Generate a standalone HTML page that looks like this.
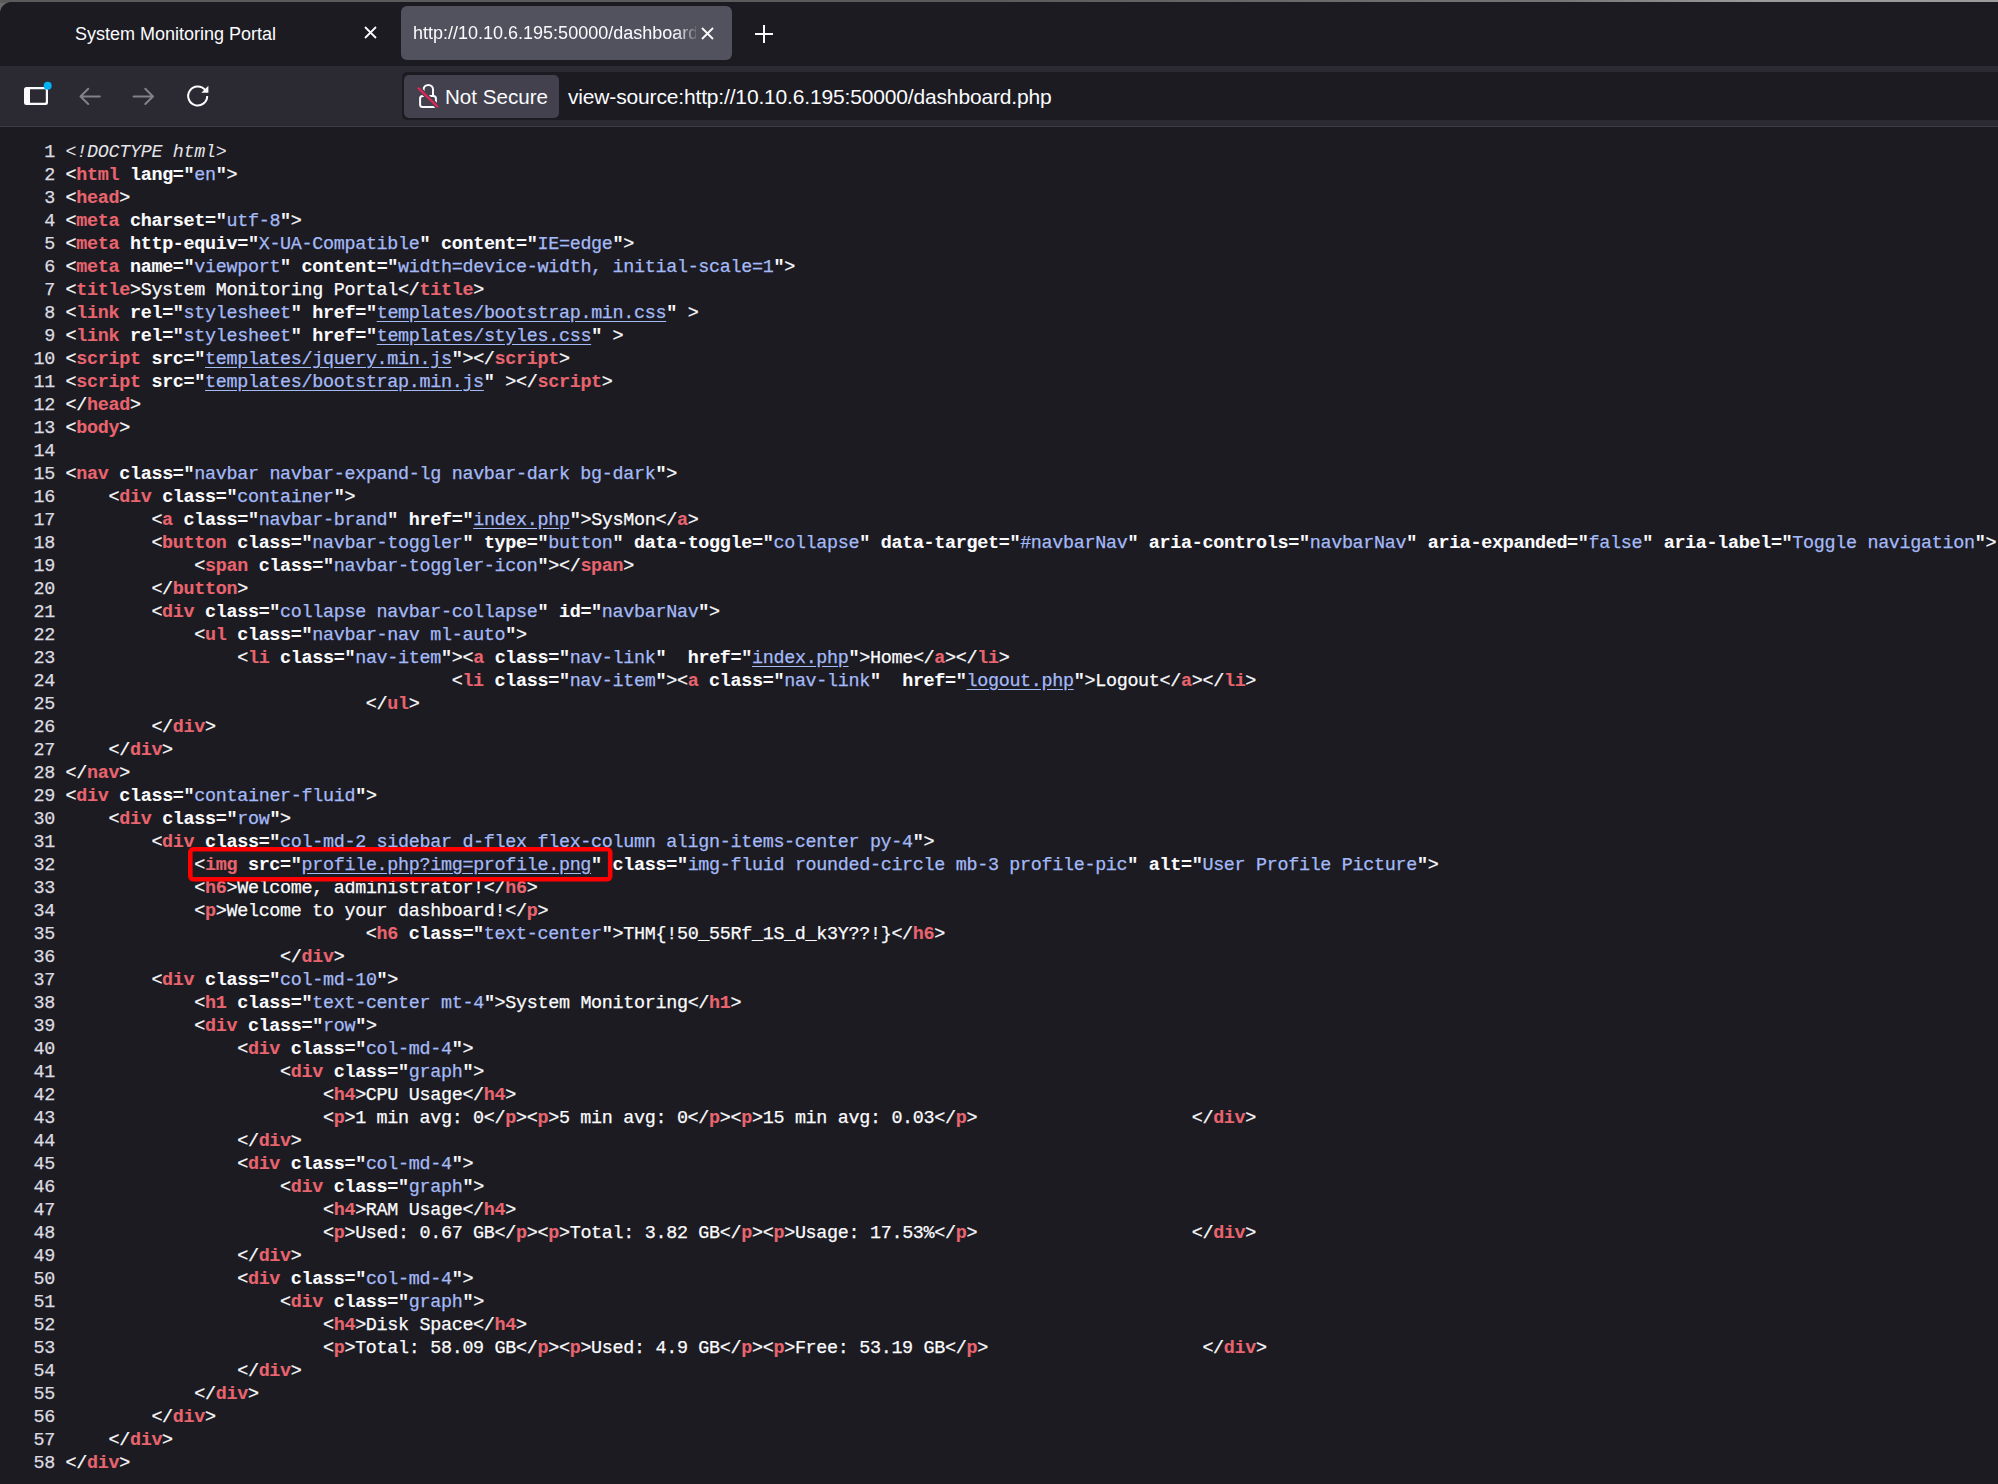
<!DOCTYPE html>
<html><head><meta charset="utf-8">
<style>
html,body{margin:0;padding:0;}
body{width:1998px;height:1484px;overflow:hidden;background:#6a6a6a;position:relative;font-family:"Liberation Sans",sans-serif;}
#top{position:absolute;left:0;top:0;width:1998px;height:3px;background:linear-gradient(to right,#5b5b5b 0px,#5b5b5b 1000px,#6c6c6c 1350px,#747474 1550px,#9a9a9a 1750px,#9c9c9c 1998px);}
#win{position:absolute;left:0;top:2px;width:1998px;height:1482px;background:#1c1b22;border-top-left-radius:12px;overflow:hidden;}
#tabs{position:absolute;left:0;top:0;width:1998px;height:64px;background:#1c1b22;}
.tabtitle{position:absolute;color:#fbfbfe;font-size:18px;white-space:nowrap;}
#t1{left:75px;top:22px;}
#sel{position:absolute;left:401px;top:4px;width:331px;height:54px;background:#52525e;border-radius:6px;overflow:hidden;}
#t2{left:12px;top:17px;width:283px;overflow:hidden;-webkit-mask-image:linear-gradient(to right,#000 262px,rgba(0,0,0,0.2) 283px);mask-image:linear-gradient(to right,#000 262px,rgba(0,0,0,0.2) 283px);}
#toolbar{position:absolute;left:0;top:64px;width:1998px;height:60px;background:#2b2a33;}
#tbline{position:absolute;left:0;top:124px;width:1998px;height:1px;background:#3c3b45;}
#urlbar{position:absolute;left:402px;top:6px;width:1700px;height:48px;background:#1c1b22;border-radius:5px;}
#pill{position:absolute;left:2px;top:3px;width:155px;height:43px;background:#42414d;border-radius:5px;}
#nstext{position:absolute;left:41px;top:10px;font-size:20.6px;color:#fbfbfe;white-space:nowrap;}
#url{position:absolute;left:166px;top:13px;font-size:21px;letter-spacing:-0.16px;color:#fbfbfe;white-space:nowrap;}
#content{position:absolute;left:0;top:125px;width:1998px;height:1357px;background:#1c1b22;}
#code{position:absolute;left:12px;top:13.6px;font-family:"Liberation Mono",monospace;font-size:18.4px;letter-spacing:-0.3125px;line-height:23px;color:#fbfbfe;white-space:pre;-webkit-text-stroke:0.25px currentColor;}
.l{height:23px;padding-left:53.6px;position:relative;}
.n{position:absolute;left:0;width:42.9px;text-align:right;color:#dcdce0;}
b{font-weight:bold;-webkit-text-stroke:0.1px currentColor;}
.t{color:#e8646e;}
.v{color:#a4baf6;}
.u{text-decoration:underline;text-underline-offset:3px;}
.d{color:#e4e4e8;font-style:italic;-webkit-text-stroke:0;}
</style></head><body>
<div id="top"></div>
<div id="win">
 <div id="tabs">
  <div class="tabtitle" id="t1">System Monitoring Portal</div>
  <svg style="position:absolute;left:364px;top:24px" width="13" height="13" viewBox="0 0 13 13"><path d="M1 1L12 12M12 1L1 12" stroke="#fbfbfe" stroke-width="1.8"/></svg>
  <div id="sel"><div class="tabtitle" id="t2">http://10.10.6.195:50000/dashboard.php</div>
   <svg style="position:absolute;left:300px;top:21px" width="13" height="13" viewBox="0 0 13 13"><path d="M1 1L12 12M12 1L1 12" stroke="#fbfbfe" stroke-width="1.8"/></svg>
  </div>
  <svg style="position:absolute;left:755px;top:23px" width="18" height="18" viewBox="0 0 18 18"><path d="M9 0V18M0 9H18" stroke="#fbfbfe" stroke-width="2"/></svg>
 </div>
 <div id="toolbar">
  <svg style="position:absolute;left:0;top:0" width="240" height="60" viewBox="0 66 240 60">
   <path fill="#fbfbfe" fill-rule="evenodd" d="M26.5 87H45.5A2.5 2.5 0 0 1 48 89.5V102.5A2.5 2.5 0 0 1 45.5 105H26.5A2.5 2.5 0 0 1 24 102.5V89.5A2.5 2.5 0 0 1 26.5 87ZM30 89.2H44.8A1 1 0 0 1 45.8 90.2V101.8A1 1 0 0 1 44.8 102.8H30Z"/>
   <circle cx="47.7" cy="85.7" r="4" fill="#00b3f4"/>
   <g stroke="#fbfbfe" stroke-opacity="0.42" stroke-width="2" fill="none" stroke-linecap="round" stroke-linejoin="round">
    <path d="M99.8 96.5H80.5M88.2 88.8L80.5 96.5L88.2 104"/>
    <path d="M133.6 96.5H153M145.3 88.8L153 96.5L145.3 104"/>
   </g>
   <path d="M205.2 90.2A9.5 9.5 0 1 0 207.2 96" stroke="#fbfbfe" stroke-width="2" fill="none"/>
   <path d="M201.3 92.7H208.4V85.8Z" fill="#fbfbfe"/>
  </svg>
  <div id="urlbar">
   <div id="pill"><div id="nstext">Not Secure</div>
    <svg style="position:absolute;left:0;top:0" width="60" height="43" viewBox="404 75 60 43">
     <path d="M423.6 96.5V89.6A4.7 4.7 0 0 1 433 89.6V97" stroke="#fbfbfe" stroke-width="2" fill="none"/>
     <rect x="420.1" y="96" width="15.8" height="11" rx="2.5" stroke="#fbfbfe" stroke-width="2" fill="none"/>
     <path d="M418 87.7L437.9 107" stroke="#42414d" stroke-width="4.6"/>
     <path d="M418.6 88.3L437.3 106.4" stroke="#dc2654" stroke-width="2.3" stroke-linecap="round"/>
    </svg></div>
   <div id="url">view-source:http://10.10.6.195:50000/dashboard.php</div>
  </div>
 </div>
 <div id="tbline"></div>
 <div id="content">
  <div id="code"><div class="l"><span class="n">1</span><i class="d">&lt;!DOCTYPE html&gt;</i></div><div class="l"><span class="n">2</span>&lt;<b class="t">html</b> <b>lang="</b><span class="v">en</span><b>"</b>&gt;</div><div class="l"><span class="n">3</span>&lt;<b class="t">head</b>&gt;</div><div class="l"><span class="n">4</span>&lt;<b class="t">meta</b> <b>charset="</b><span class="v">utf-8</span><b>"</b>&gt;</div><div class="l"><span class="n">5</span>&lt;<b class="t">meta</b> <b>http-equiv="</b><span class="v">X-UA-Compatible</span><b>"</b> <b>content="</b><span class="v">IE=edge</span><b>"</b>&gt;</div><div class="l"><span class="n">6</span>&lt;<b class="t">meta</b> <b>name="</b><span class="v">viewport</span><b>"</b> <b>content="</b><span class="v">width=device-width, initial-scale=1</span><b>"</b>&gt;</div><div class="l"><span class="n">7</span>&lt;<b class="t">title</b>&gt;System Monitoring Portal&lt;/<b class="t">title</b>&gt;</div><div class="l"><span class="n">8</span>&lt;<b class="t">link</b> <b>rel="</b><span class="v">stylesheet</span><b>"</b> <b>href="</b><span class="v u">templates/bootstrap.min.css</span><b>"</b> &gt;</div><div class="l"><span class="n">9</span>&lt;<b class="t">link</b> <b>rel="</b><span class="v">stylesheet</span><b>"</b> <b>href="</b><span class="v u">templates/styles.css</span><b>"</b> &gt;</div><div class="l"><span class="n">10</span>&lt;<b class="t">script</b> <b>src="</b><span class="v u">templates/jquery.min.js</span><b>"</b>&gt;&lt;/<b class="t">script</b>&gt;</div><div class="l"><span class="n">11</span>&lt;<b class="t">script</b> <b>src="</b><span class="v u">templates/bootstrap.min.js</span><b>"</b> &gt;&lt;/<b class="t">script</b>&gt;</div><div class="l"><span class="n">12</span>&lt;/<b class="t">head</b>&gt;</div><div class="l"><span class="n">13</span>&lt;<b class="t">body</b>&gt;</div><div class="l"><span class="n">14</span></div><div class="l"><span class="n">15</span>&lt;<b class="t">nav</b> <b>class="</b><span class="v">navbar navbar-expand-lg navbar-dark bg-dark</span><b>"</b>&gt;</div><div class="l"><span class="n">16</span>    &lt;<b class="t">div</b> <b>class="</b><span class="v">container</span><b>"</b>&gt;</div><div class="l"><span class="n">17</span>        &lt;<b class="t">a</b> <b>class="</b><span class="v">navbar-brand</span><b>"</b> <b>href="</b><span class="v u">index.php</span><b>"</b>&gt;SysMon&lt;/<b class="t">a</b>&gt;</div><div class="l"><span class="n">18</span>        &lt;<b class="t">button</b> <b>class="</b><span class="v">navbar-toggler</span><b>"</b> <b>type="</b><span class="v">button</span><b>"</b> <b>data&#45;toggle="</b><span class="v">collapse</span><b>"</b> <b>data&#45;target="</b><span class="v">#navbarNav</span><b>"</b> <b>aria-controls="</b><span class="v">navbarNav</span><b>"</b> <b>aria-expanded="</b><span class="v">false</span><b>"</b> <b>aria-label="</b><span class="v">Toggle navigation</span><b>"</b>&gt;</div><div class="l"><span class="n">19</span>            &lt;<b class="t">span</b> <b>class="</b><span class="v">navbar-toggler-icon</span><b>"</b>&gt;&lt;/<b class="t">span</b>&gt;</div><div class="l"><span class="n">20</span>        &lt;/<b class="t">button</b>&gt;</div><div class="l"><span class="n">21</span>        &lt;<b class="t">div</b> <b>class="</b><span class="v">collapse navbar-collapse</span><b>"</b> <b>id="</b><span class="v">navbarNav</span><b>"</b>&gt;</div><div class="l"><span class="n">22</span>            &lt;<b class="t">ul</b> <b>class="</b><span class="v">navbar-nav ml-auto</span><b>"</b>&gt;</div><div class="l"><span class="n">23</span>                &lt;<b class="t">li</b> <b>class="</b><span class="v">nav-item</span><b>"</b>&gt;&lt;<b class="t">a</b> <b>class="</b><span class="v">nav-link</span><b>"</b>  <b>href="</b><span class="v u">index.php</span><b>"</b>&gt;Home&lt;/<b class="t">a</b>&gt;&lt;/<b class="t">li</b>&gt;</div><div class="l"><span class="n">24</span>                                    &lt;<b class="t">li</b> <b>class="</b><span class="v">nav-item</span><b>"</b>&gt;&lt;<b class="t">a</b> <b>class="</b><span class="v">nav-link</span><b>"</b>  <b>href="</b><span class="v u">logout.php</span><b>"</b>&gt;Logout&lt;/<b class="t">a</b>&gt;&lt;/<b class="t">li</b>&gt;</div><div class="l"><span class="n">25</span>                            &lt;/<b class="t">ul</b>&gt;</div><div class="l"><span class="n">26</span>        &lt;/<b class="t">div</b>&gt;</div><div class="l"><span class="n">27</span>    &lt;/<b class="t">div</b>&gt;</div><div class="l"><span class="n">28</span>&lt;/<b class="t">nav</b>&gt;</div><div class="l"><span class="n">29</span>&lt;<b class="t">div</b> <b>class="</b><span class="v">container-fluid</span><b>"</b>&gt;</div><div class="l"><span class="n">30</span>    &lt;<b class="t">div</b> <b>class="</b><span class="v">row</span><b>"</b>&gt;</div><div class="l"><span class="n">31</span>        &lt;<b class="t">div</b> <b>class="</b><span class="v">col-md-2 sidebar d-flex flex-column align-items-center py-4</span><b>"</b>&gt;</div><div class="l"><span class="n">32</span>            &lt;<b class="t">img</b> <b>src="</b><span class="v u">profile.php?img=profile.png</span><b>"</b> <b>class="</b><span class="v">img-fluid rounded-circle mb-3 profile-pic</span><b>"</b> <b>alt="</b><span class="v">User Profile Picture</span><b>"</b>&gt;</div><div class="l"><span class="n">33</span>            &lt;<b class="t">h6</b>&gt;Welcome, administrator!&lt;/<b class="t">h6</b>&gt;</div><div class="l"><span class="n">34</span>            &lt;<b class="t">p</b>&gt;Welcome to your dashboard!&lt;/<b class="t">p</b>&gt;</div><div class="l"><span class="n">35</span>                            &lt;<b class="t">h6</b> <b>class="</b><span class="v">text-center</span><b>"</b>&gt;THM{!50_55Rf_1S_d_k3Y??!}&lt;/<b class="t">h6</b>&gt;</div><div class="l"><span class="n">36</span>                    &lt;/<b class="t">div</b>&gt;</div><div class="l"><span class="n">37</span>        &lt;<b class="t">div</b> <b>class="</b><span class="v">col-md-10</span><b>"</b>&gt;</div><div class="l"><span class="n">38</span>            &lt;<b class="t">h1</b> <b>class="</b><span class="v">text-center mt-4</span><b>"</b>&gt;System Monitoring&lt;/<b class="t">h1</b>&gt;</div><div class="l"><span class="n">39</span>            &lt;<b class="t">div</b> <b>class="</b><span class="v">row</span><b>"</b>&gt;</div><div class="l"><span class="n">40</span>                &lt;<b class="t">div</b> <b>class="</b><span class="v">col-md-4</span><b>"</b>&gt;</div><div class="l"><span class="n">41</span>                    &lt;<b class="t">div</b> <b>class="</b><span class="v">graph</span><b>"</b>&gt;</div><div class="l"><span class="n">42</span>                        &lt;<b class="t">h4</b>&gt;CPU Usage&lt;/<b class="t">h4</b>&gt;</div><div class="l"><span class="n">43</span>                        &lt;<b class="t">p</b>&gt;1 min avg: 0&lt;/<b class="t">p</b>&gt;&lt;<b class="t">p</b>&gt;5 min avg: 0&lt;/<b class="t">p</b>&gt;&lt;<b class="t">p</b>&gt;15 min avg: 0.03&lt;/<b class="t">p</b>&gt;                    &lt;/<b class="t">div</b>&gt;</div><div class="l"><span class="n">44</span>                &lt;/<b class="t">div</b>&gt;</div><div class="l"><span class="n">45</span>                &lt;<b class="t">div</b> <b>class="</b><span class="v">col-md-4</span><b>"</b>&gt;</div><div class="l"><span class="n">46</span>                    &lt;<b class="t">div</b> <b>class="</b><span class="v">graph</span><b>"</b>&gt;</div><div class="l"><span class="n">47</span>                        &lt;<b class="t">h4</b>&gt;RAM Usage&lt;/<b class="t">h4</b>&gt;</div><div class="l"><span class="n">48</span>                        &lt;<b class="t">p</b>&gt;Used: 0.67 GB&lt;/<b class="t">p</b>&gt;&lt;<b class="t">p</b>&gt;Total: 3.82 GB&lt;/<b class="t">p</b>&gt;&lt;<b class="t">p</b>&gt;Usage: 17.53%&lt;/<b class="t">p</b>&gt;                    &lt;/<b class="t">div</b>&gt;</div><div class="l"><span class="n">49</span>                &lt;/<b class="t">div</b>&gt;</div><div class="l"><span class="n">50</span>                &lt;<b class="t">div</b> <b>class="</b><span class="v">col-md-4</span><b>"</b>&gt;</div><div class="l"><span class="n">51</span>                    &lt;<b class="t">div</b> <b>class="</b><span class="v">graph</span><b>"</b>&gt;</div><div class="l"><span class="n">52</span>                        &lt;<b class="t">h4</b>&gt;Disk Space&lt;/<b class="t">h4</b>&gt;</div><div class="l"><span class="n">53</span>                        &lt;<b class="t">p</b>&gt;Total: 58.09 GB&lt;/<b class="t">p</b>&gt;&lt;<b class="t">p</b>&gt;Used: 4.9 GB&lt;/<b class="t">p</b>&gt;&lt;<b class="t">p</b>&gt;Free: 53.19 GB&lt;/<b class="t">p</b>&gt;                    &lt;/<b class="t">div</b>&gt;</div><div class="l"><span class="n">54</span>                &lt;/<b class="t">div</b>&gt;</div><div class="l"><span class="n">55</span>            &lt;/<b class="t">div</b>&gt;</div><div class="l"><span class="n">56</span>        &lt;/<b class="t">div</b>&gt;</div><div class="l"><span class="n">57</span>    &lt;/<b class="t">div</b>&gt;</div><div class="l"><span class="n">58</span>&lt;/<b class="t">div</b>&gt;</div></div>
 </div>
</div>
<svg style="position:absolute;left:0;top:0" width="700" height="900" viewBox="0 0 700 900"><rect x="190.3" y="849.3" width="419.9" height="29.9" rx="3" fill="none" stroke="#f00" stroke-width="4.6"/></svg>
</body></html>
